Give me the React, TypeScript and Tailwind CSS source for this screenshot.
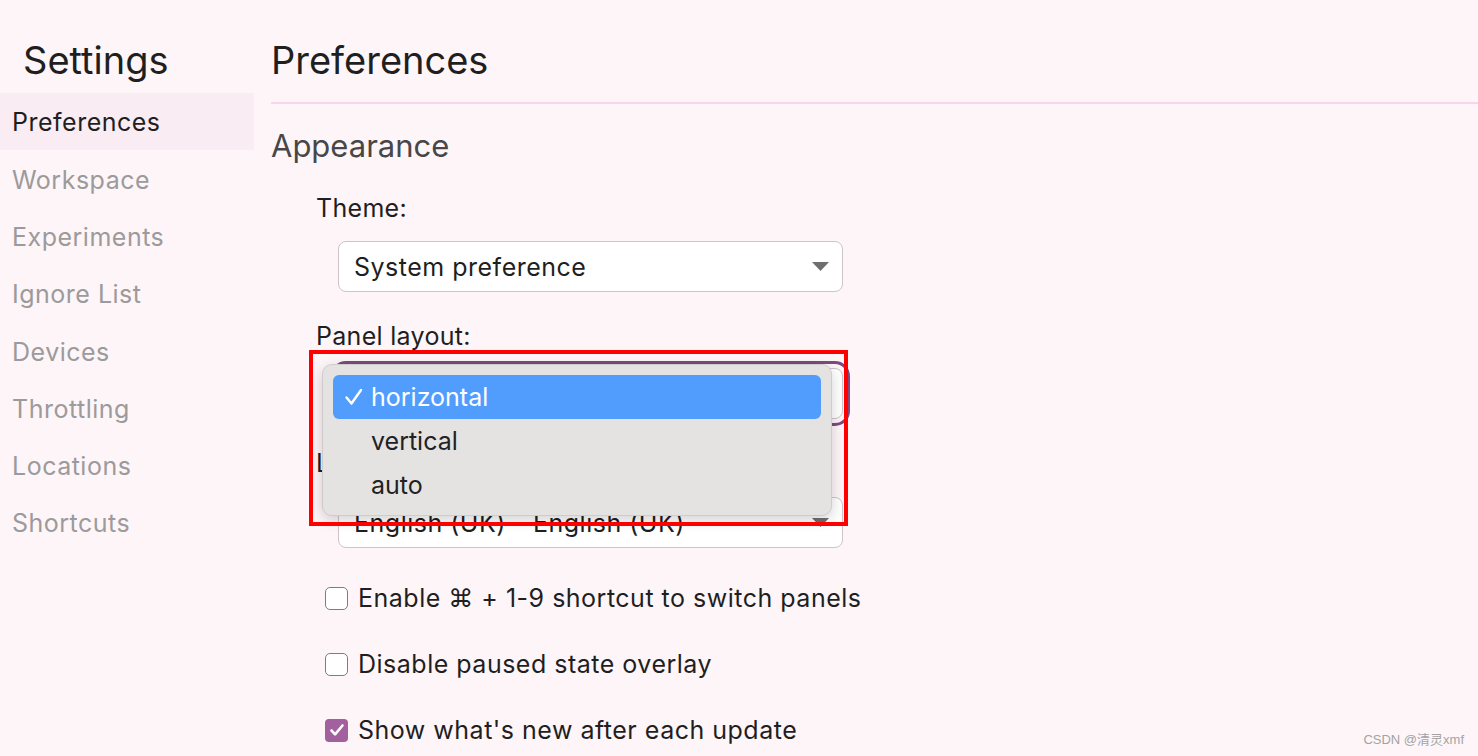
import React from 'react';

const sideItems = ['Preferences', 'Workspace', 'Experiments', 'Ignore List', 'Devices', 'Throttling', 'Locations', 'Shortcuts'];

const Arrow = () => (
  <svg width="17" height="9" viewBox="0 0 17 9" className="shrink-0">
    <path d="M0 0h17L8.5 9z" fill="#6f6f6f" />
  </svg>
);

const Select: React.FC<{ value: string; className?: string; children?: React.ReactNode }> = ({ value, className = '', children }) => (
  <div className={`relative ml-[22px] w-[505px] h-[51px] rounded-[8px] border border-[#cdc3c9] bg-white flex items-center justify-between pl-[15px] pr-[13px] ${className}`}>
    <span className="text-[25px] leading-[30px] tracking-[0.5px] text-[#1f1f1f]">{value}</span>
    <Arrow />
    {children}
  </div>
);

const Checkbox: React.FC<{ checked?: boolean; label: string }> = ({ checked, label }) => (
  <div className="flex items-center h-[30px] ml-[9px]">
    {checked ? (
      <span className="w-[23px] h-[23px] rounded-[4px] bg-[#a2619e] flex items-center justify-center">
        <svg width="16" height="16" viewBox="0 0 16 16">
          <path d="M2.5 8.5l3.6 3.8L13.5 3.5" fill="none" stroke="white" strokeWidth="2.6" strokeLinecap="round" strokeLinejoin="round" />
        </svg>
      </span>
    ) : (
      <span className="w-[23px] h-[23px] rounded-[5px] border-[1.5px] border-[#7d7d7d] bg-white" />
    )}
    <span className="ml-[10px] text-[25px] leading-[30px] tracking-[0.5px] text-[#1f1f1f]">{label}</span>
  </div>
);

export default function App() {
  return (
    <div className="relative h-[756px] w-full overflow-hidden bg-[#fef5f9] flex font-['Inter','Noto_Sans',sans-serif]">
      {/* Sidebar */}
      <aside className="w-[254px] shrink-0">
        <h1 className="pt-[37px] pl-[23px] text-[38px] leading-[46px] text-[#1f1f1f] h-[93px]">Settings</h1>
        <ul>
          {sideItems.map((item, i) => (
            <li
              key={item}
              className={`h-[57.3px] flex items-center pl-[12px] pt-[3px] text-[25px] tracking-[0.5px] ${i === 0 ? 'bg-[#f9ecf3] text-[#1f1f1f]' : 'text-[#9c9a9b]'}`}
            >
              {item}
            </li>
          ))}
        </ul>
      </aside>

      {/* Main */}
      <main className="flex-1 pl-[17px]">
        <div className="h-[104px] border-b-2 border-[#f7d5ef] pt-[37px]">
          <h2 className="text-[38px] leading-[46px] text-[#1f1f1f]">Preferences</h2>
        </div>

        <h3 className="mt-[23px] text-[31px] leading-[38px] text-[#474747]">Appearance</h3>

        <div className="pl-[45px]">
          <div className="mt-[28px] text-[25px] leading-[30px] tracking-[0.3px] text-[#1f1f1f]">Theme:</div>
          <Select value="System preference" className="mt-[18px]" />

          <div className="mt-[29px] text-[25px] leading-[30px] tracking-[0.3px] text-[#1f1f1f]">Panel layout:</div>
          <Select value="horizontal" className="mt-[17px] bg-[#f1edef] outline-[3px] outline-solid outline-[#7c4a7f] outline-offset-[4px]">
            {/* native menu */}
            <div className="absolute left-[-17px] top-[-5px] w-[510px] h-[152px] rounded-[10px] bg-[#e4e3e2] border border-[#cfcccd] shadow-[0_4px_14px_rgba(0,0,0,0.18)] p-[10px] z-10">
              <div className="h-[44px] rounded-[6px] bg-[#519dfe] flex items-center pl-[11px] text-white">
                <svg width="20" height="20" viewBox="0 0 20 20" className="shrink-0">
                  <path d="M2.5 10.5l5 6L17 3" fill="none" stroke="white" strokeWidth="2.4" strokeLinecap="round" strokeLinejoin="round" />
                </svg>
                <span className="ml-[7px] text-[25px] leading-[30px]">horizontal</span>
              </div>
              <div className="h-[44px] flex items-center pl-[38px] text-[25px] leading-[30px] text-[#222]">vertical</div>
              <div className="h-[44px] flex items-center pl-[38px] text-[25px] leading-[30px] text-[#222]">auto</div>
            </div>
            {/* annotation box */}
            <div className="absolute left-[-30px] top-[-19px] w-[539px] h-[176px] border-[4px] border-[#ff0000] z-20 pointer-events-none" />
          </Select>

          <div className="mt-[29px] text-[25px] leading-[30px] text-[#1f1f1f]">Language:</div>
          <Select value="English (UK) - English (UK)" className="mt-[19px]" />

          <div className="mt-[35px] flex flex-col gap-[36px]">
            <Checkbox label="Enable ⌘ + 1-9 shortcut to switch panels" />
            <Checkbox label="Disable paused state overlay" />
            <Checkbox checked label="Show what's new after each update" />
          </div>
        </div>
      </main>

      <div className="absolute right-[14px] bottom-[8px] text-[13px] leading-[16px] text-[#a3a3a3] font-['Liberation_Sans','Noto_Sans_CJK_SC',sans-serif]">
        CSDN @清灵xmf
      </div>
    </div>
  );
}
